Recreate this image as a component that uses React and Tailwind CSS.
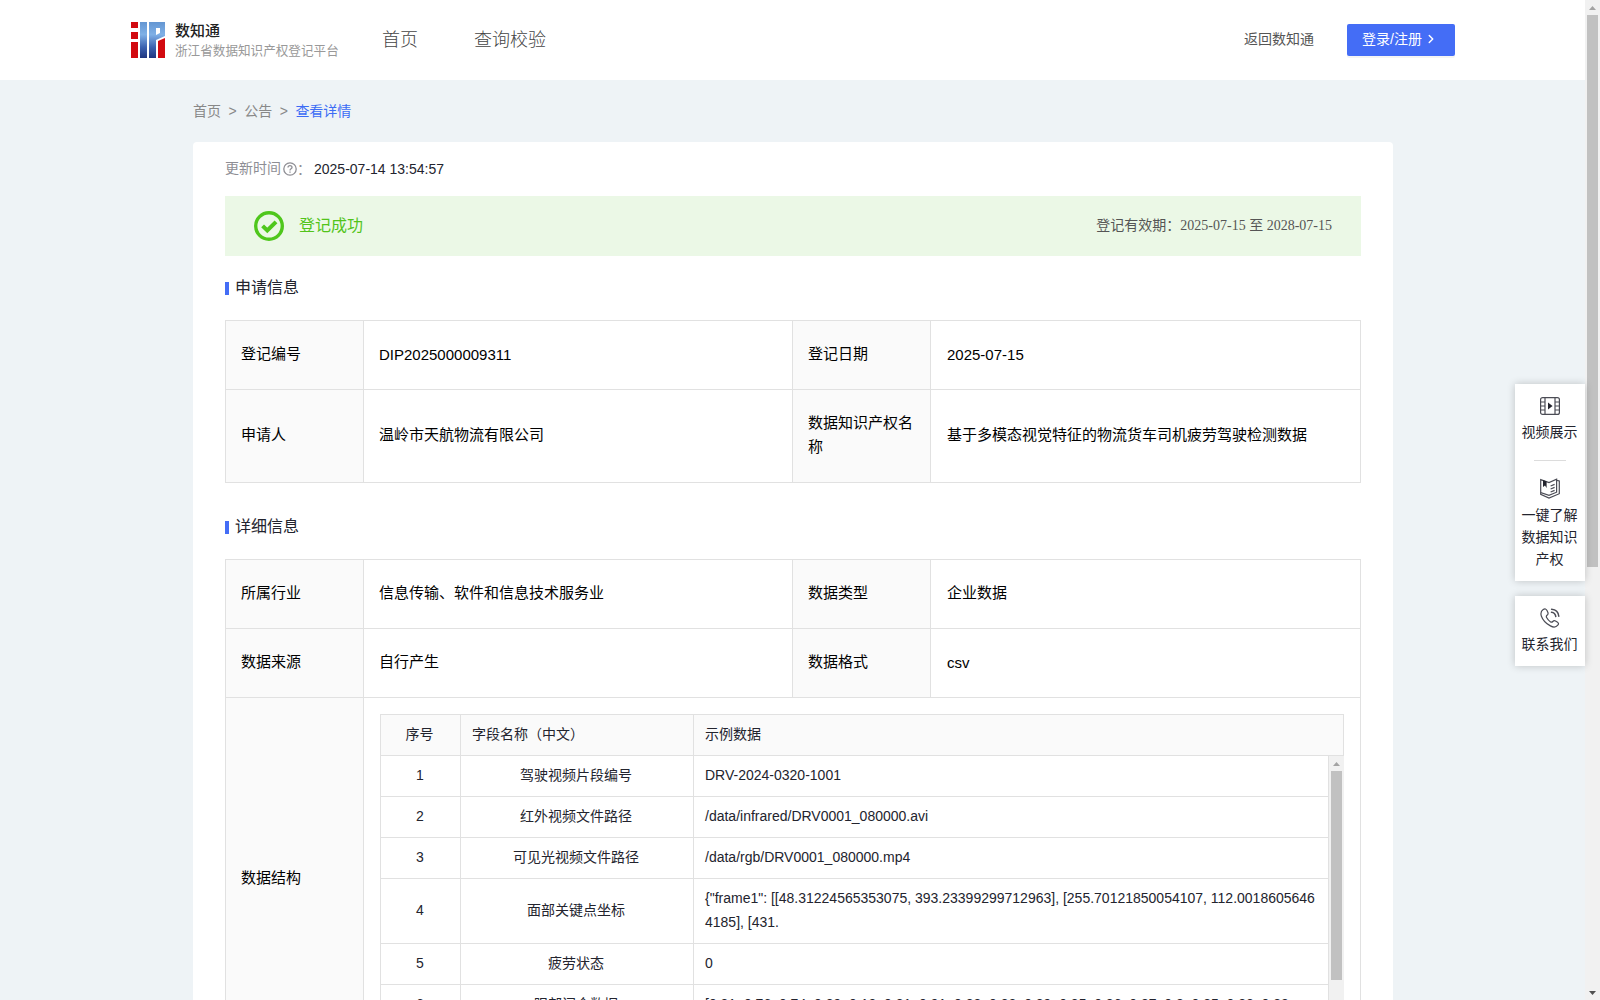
import { ChevronRight } from 'lucide-react';
import clsx from 'clsx';

const fields = [
    { id: 1, name: '驾驶视频片段编号', sample: 'DRV-2024-0320-1001' },
    { id: 2, name: '红外视频文件路径', sample: '/data/infrared/DRV0001_080000.avi' },
    { id: 3, name: '可见光视频文件路径', sample: '/data/rgb/DRV0001_080000.mp4' },
    {
        id: 4,
        name: '面部关键点坐标',
        sample: '{"frame1": [[48.31224565353075, 393.23399299712963], [255.70121850054107, 112.00186056464185], [431.',
    },
    { id: 5, name: '疲劳状态', sample: '0' },
    {
        id: 6,
        name: '眼部闭合数据',
        sample: '[0.81, 0.76, 0.74, 0.89, 0.13, 0.81, 0.91, 0.88, 0.82, 0.89, 0.85, 0.86, 0.87, 0.8, 0.85, 0.82, 0.83',
    },
];

const Logo = () => (
    <svg width="34" height="36" viewBox="0 0 34 36">
        <defs>
            <linearGradient id="logoBlue" x1="0" y1="0" x2="0" y2="36" gradientUnits="userSpaceOnUse">
                <stop offset="0" stopColor="#6496d2" />
                <stop offset="0.35" stopColor="#7fb0e6" />
                <stop offset="0.7" stopColor="#3c62b0" />
                <stop offset="1" stopColor="#1f3680" />
            </linearGradient>
        </defs>
        <path d="M0 0h7v6H0zM0 10h7v7H0zM0 20h7v16H0z" fill="#d20a10" />
        <path d="M9 0h7v36H9z" fill="url(#logoBlue)" />
        <path d="M18 0h16v14l-9 4v18h-7zM25 6v7l4-2V6z" fill="url(#logoBlue)" fillRule="evenodd" />
        <path d="M27 19l7-3v20h-7z" fill="#d20a10" />
    </svg>
);

const VideoIcon = () => (
    <svg width="20" height="18" viewBox="0 0 20 18" fill="none" stroke="#4b4c55" strokeWidth="1.2">
        <rect x="0.6" y="0.6" width="18.8" height="16.8" rx="2" />
        <path d="M5 .6v16.8M15 .6v16.8M.6 5H5M.6 9H5M.6 13H5M15 5h4.4M15 9h4.4M15 13h4.4" />
        <path d="M8 5.6v6.8l4.6-3.4z" fill="#23242e" stroke="none" />
    </svg>
);

const BookIcon = () => (
    <svg width="20" height="21" viewBox="0 0 20 21" fill="none" stroke="#4b4c55" strokeWidth="1.2">
        <path d="M.7 1.6L9 4.6l7.600-3.400v13L9 17.400.7 14.600z" />
        <path d="M.7 14.600v1.800L9 20l10.300-4.300V3l-2.500-.6" />
        <path d="M3 2v7l2-1.600L6.600 10V3.400z" fill="#23242e" stroke="none" />
        <path d="M10.600 8l4-1.600M10.600 11l4-1.600M10.600 14l4-1.600" />
    </svg>
);

const PhoneIcon = () => (
    <svg width="20" height="20" viewBox="0 0 20 20" fill="none" stroke="#4b4c55" strokeWidth="1.2" strokeLinecap="round" strokeLinejoin="round">
        <path d="M3.2 1.6C5 .4 6.200 1 7 2.600l.9 2c.5 1.200.1 1.900-.9 2.700-.9.7-.9 1.300-.4 2.300 1 1.900 2.400 3.300 4 4.300.9.5 1.500.4 2.200-.4.8-.9 1.600-1.100 2.700-.5l1.700 1c1.400.9 1.700 2 .6 3.200-1.800 2.200-4.300 2.400-7.400.7C6.300 15.700 2.800 12 1.400 8.200.4 5.300 1.100 3 3.200 1.600z" />
        <path d="M11.500 4.300c2.300.3 3.900 1.900 4.300 4.200M11.600 1.200c4 .3 6.800 3 7.200 7.100" strokeWidth="1.500" />
    </svg>
);

const HelpIcon = () => (
    <svg width="14" height="14" viewBox="0 0 14 14" fill="none" stroke="#8e8e94" strokeWidth="1.3">
        <circle cx="7" cy="7" r="6.200" />
        <path d="M5 5.600c0-2.600 4-2.500 4-.2C9 6.800 7 6.700 7 8.400M7 9.400v1.300" />
    </svg>
);

const SuccessIcon = () => (
    <svg width="30" height="30" viewBox="0 0 30 30" fill="none" stroke="#4fc71c">
        <circle cx="15" cy="15" r="13.300" strokeWidth="3.400" />
        <path d="M8.600 14.800l4.700 4.700 8.700-8.700" strokeWidth="4" />
    </svg>
);

const ScrollArrow = ({ down }) => (
    <svg width="7" height="4" viewBox="0 0 7 4" className={clsx(down && 'rotate-180')}>
        <path d="M3.500 0L7 4H0z" fill={down ? '#505050' : '#a3a3a3'} />
    </svg>
);

const SectionTitle = ({ children, className }) => (
    <div className={clsx('flex h-6 items-center text-base text-[#23242e]', className)}>
        <span className="mt-px mr-1.5 h-[13px] w-1 bg-[#446df6]"></span>
        {children}
    </div>
);

const Label = ({ children }) => (
    <th className="w-[138px] border border-[#e1e1e1] bg-[#fafafa] px-[15px] pb-0.5 text-left font-normal">{children}</th>
);

const isLatin = (text) => /^[\w-]+$/.test(text);

const Value = ({ children, wide }) => (
    <td
        className={clsx(
            'border border-[#e1e1e1] text-left',
            wide ? 'w-[430px] pl-4' : 'w-[429px] pl-[15px]',
            !isLatin(children) && 'pb-0.5'
        )}
    >
        {children}
    </td>
);

const InfoRow = ({ items, className }) => (
    <tr className={className}>
        <Label>{items[0]}</Label>
        <Value>{items[1]}</Value>
        <Label>{items[2]}</Label>
        <Value wide>{items[3]}</Value>
    </tr>
);

const FieldTable = () => (
    <div className="h-[330px] w-[964px] overflow-hidden text-sm text-[#23242e]">
        <div className="flex h-[42px] border border-[#e1e1e1] bg-[#fafafa] leading-[38px]">
            <div className="w-20 border-r border-[#e1e1e1] pr-0.5 text-center">序号</div>
            <div className="w-[233px] border-r border-[#e1e1e1] pl-[11px]">字段名称（中文）</div>
            <div className="pl-[11px]">示例数据</div>
        </div>
        <div className="flex h-[288px] overflow-hidden">
            <div className="w-[949px] border-l border-[#e1e1e1]">
                {fields.map((f) => (
                    <div key={f.id} className="flex border-b border-[#e1e1e1] leading-6">
                        <div className="flex w-20 items-center justify-center border-r border-[#e1e1e1] pr-px pb-0.5">{f.id}</div>
                        <div className="flex w-[233px] items-center justify-center border-r border-[#e1e1e1] pr-0.5 pb-0.5">{f.name}</div>
                        <div className="w-[635px] border-r border-[#e1e1e1] pt-[7px] pr-3 pb-[9px] pl-[11px] break-all">{f.sample}</div>
                    </div>
                ))}
            </div>
            <div className="flex w-[15px] flex-col items-center bg-[#f1f1f1]">
                <div className="flex h-[15px] items-center pt-0.5"><ScrollArrow /></div>
                <div className="h-[209px] w-[11px] bg-[#c1c1c1]"></div>
            </div>
        </div>
    </div>
);

const SideTools = () => (
    <aside className="absolute top-[384px] right-[15px] flex w-[70px] flex-col gap-[15px] text-center text-sm leading-[22px] text-[#23242e]">
        <div className="flex h-[197px] flex-col items-center bg-white pt-[13px] pr-px shadow-[0_0_8px_rgba(0,0,0,0.2)]">
            <VideoIcon />
            <span className="mt-1.5">视频展示</span>
            <span className="mt-[17px] h-px w-8 bg-[#dcdcdc]"></span>
            <span className="mt-[17px]"><BookIcon /></span>
            <span className="mt-[5px] w-14">一键了解数据知识产权</span>
        </div>
        <div className="flex h-[70px] flex-col items-center bg-white pt-3 pr-px shadow-[0_0_8px_rgba(0,0,0,0.2)]">
            <PhoneIcon />
            <span className="mt-[5px]">联系我们</span>
        </div>
    </aside>
);

const App = () => {
    return (
        <div className="relative flex h-[1000px] w-[1600px] overflow-hidden bg-[#eef3f6] font-['Liberation_Sans','Noto_Sans_CJK_SC',sans-serif]">
            <div className="w-[1585px]">
                <header className="flex h-20 items-center bg-white pr-[130px] pl-[131px]">
                    <Logo />
                    <div className="ml-[10px] w-[164px] pt-0.5">
                        <div className="text-[15px] leading-5 font-medium text-[#222]">数知通</div>
                        <div className="text-[12.6px] leading-5 whitespace-nowrap text-[#999]">浙江省数据知识产权登记平台</div>
                    </div>
                    <nav className="ml-[43px] flex gap-14 text-lg font-light text-[#444]">
                        <a>首页</a>
                        <a>查询校验</a>
                    </nav>
                    <a className="ml-auto pb-0.5 text-sm text-[#555]">返回数知通</a>
                    <button className="ml-[33px] flex h-8 w-[108px] items-center rounded-xs bg-[#446df6] pb-0.5 pl-[15px] text-sm text-white shadow-[0_2px_0_rgba(0,0,0,0.045)]">
                        登录/注册
                        <ChevronRight size={14} strokeWidth={2.5} className="ml-0.5" />
                    </button>
                </header>

                <main className="ml-[193px] w-[1200px]">
                    <div className="flex h-[62px] items-center gap-[7.5px] pb-px text-sm text-[#888]">
                        <span>首页</span>
                        <span>&gt;</span>
                        <span>公告</span>
                        <span>&gt;</span>
                        <span className="text-[#3c6cf5]">查看详情</span>
                    </div>

                    <div className="h-[1100px] rounded-t bg-white px-8">
                        <div className="flex h-[54px] items-center text-sm text-[#8e8e94]">
                            <span className="pb-0.5">更新时间</span>
                            <span className="ml-0.5"><HelpIcon /></span>
                            <span className="w-[17px]">：</span>
                            <span className="text-[#23242e]">2025-07-14 13:54:57</span>
                        </div>

                        <div className="flex h-[60px] items-center bg-[#ebf8e6] pr-[29px] pl-[29px]">
                            <SuccessIcon />
                            <span className="ml-[15px] text-base text-[#52c41a]">登记成功</span>
                            <span className="ml-auto pb-px font-['Liberation_Serif','Noto_Sans_CJK_SC',serif] text-sm text-[#555]">
                                登记有效期：2025-07-15 至 2028-07-15
                            </span>
                        </div>

                        <SectionTitle className="mt-5">申请信息</SectionTitle>
                        <table className="mt-5 w-[1136px] table-fixed border-collapse text-[15px] leading-6 text-black">
                            <tbody>
                                <InfoRow className="h-[69px]" items={['登记编号', 'DIP2025000009311', '登记日期', '2025-07-15']} />
                                <InfoRow className="h-[93px]" items={['申请人', '温岭市天航物流有限公司', '数据知识产权名称', '基于多模态视觉特征的物流货车司机疲劳驾驶检测数据']} />
                            </tbody>
                        </table>

                        <SectionTitle className="mt-8">详细信息</SectionTitle>
                        <table className="mt-5 w-[1136px] table-fixed border-collapse text-[15px] leading-6 text-black">
                            <tbody>
                                <InfoRow className="h-[69px]" items={['所属行业', '信息传输、软件和信息技术服务业', '数据类型', '企业数据']} />
                                <InfoRow className="h-[69px]" items={['数据来源', '自行产生', '数据格式', 'csv']} />
                                <tr className="h-[362px]">
                                    <Label>数据结构</Label>
                                    <td colSpan={3} className="border border-[#e1e1e1] pl-4">
                                        <FieldTable />
                                    </td>
                                </tr>
                            </tbody>
                        </table>
                    </div>
                </main>
            </div>

            <SideTools />

            <div className="flex h-[1000px] w-[15px] flex-col items-center bg-[#f1f1f1]">
                <div className="flex h-[15px] items-center"><ScrollArrow /></div>
                <div className="h-[552px] w-[11px] bg-[#c1c1c1]"></div>
                <div className="mt-auto flex h-[15px] items-center"><ScrollArrow down /></div>
            </div>
        </div>
    );
};

export default App;
